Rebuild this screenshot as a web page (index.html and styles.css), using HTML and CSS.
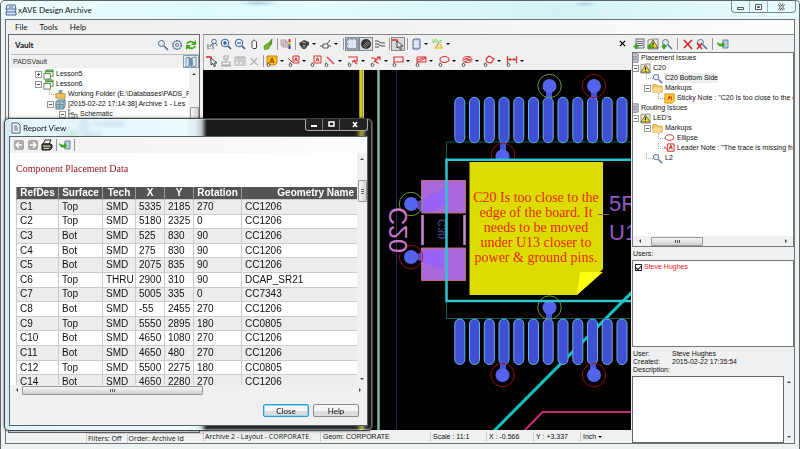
FILE: index.html
```html
<!DOCTYPE html>
<html lang="en">
<head>
<meta charset="utf-8">
<title>xAVE Design Archive</title>
<link rel="stylesheet" href="styles.css">
</head>
<body>
<svg class="defs" aria-hidden="true">
  <symbol id="lens" viewBox="0 0 12 12"><circle cx="4.5" cy="4.5" r="3" fill="#e4edf5" stroke="#56708c"/><path d="M7 7l4 4" stroke="#56708c" stroke-width="1.6"/></symbol>
  <symbol id="one" viewBox="0 0 12 12"><circle cx="8" cy="3.5" r="2.3" fill="#e4edf5" stroke="#56708c"/><path d="M6.5 5.500L4 8M9.500 5l2 3" stroke="#56708c"/><path d="M1 7.500l1-1v5M6 7.500l1-1v5M4 8v1M4 10v1" fill="none" stroke="#334a6a" stroke-width=".8"/></symbol>
  <symbol id="plus" viewBox="0 0 12 12"><circle cx="5" cy="5" r="3.8" fill="#e8f1fb" stroke="#3b5f94"/><path d="M3 5h4M5 3v4" stroke="#123f86" stroke-width="1.2"/><path d="M8 8l3 3" stroke="#3b5f94" stroke-width="1.7"/></symbol>
  <symbol id="minus" viewBox="0 0 12 12"><circle cx="5" cy="5" r="3.800" fill="#e8f1fb" stroke="#3b5f94"/><path d="M3 5h4" stroke="#123f86" stroke-width="1.200"/><path d="M8 8l3 3" stroke="#3b5f94" stroke-width="1.700"/></symbol>
  <symbol id="hand" viewBox="0 0 12 12"><path d="M4 9.500V4l1-1.500 1-.5 1 .5 1.500 1.500v5L8 10.500H5z" fill="#fff" stroke="#445"/></symbol>
  <symbol id="brush" viewBox="0 0 12 12"><path d="M10 1L6.500 5.500 9 7z" fill="#6a4" stroke="#4a8a20"/><path d="M2 8l4-3 2.500 2-2 4-4 .500z" fill="#6cb820" stroke="#4a8a20" stroke-width=".6"/></symbol>
  <symbol id="layers" viewBox="0 0 12 12"><path d="M1 2h5v5H1zM3 4h5v5H3z" fill="#f3d8dc" stroke="#9a8a98" stroke-width=".8"/><path d="M8.500 1h2v3h-2z" fill="#d33"/><path d="M8.500 4h2v2h-2z" fill="#ec3"/><path d="M8.500 6h2v2h-2z" fill="#3a3"/><path d="M8.500 8h2v3h-2z" fill="#33c"/></symbol>
  <symbol id="camera" viewBox="0 0 12 12"><path d="M1 5l5-3 5 2v3l-4 2-5-1z" fill="#444"/><circle cx="6" cy="8" r="2.500" fill="#777" stroke="#222"/><path d="M4 4l4 1" stroke="#aaa"/></symbol>
  <symbol id="gate" viewBox="0 0 12 12"><path d="M0 8h3M3 6h5v4H3zM8 8h3M7 6l3-4" fill="none" stroke="#555"/></symbol>
  <symbol id="grid" viewBox="0 0 12 12"><path d="M1 1h10v10H1z" fill="#cfdcf0" stroke="#55657c"/><path d="M1 4h10M1 8h10M4 1v10M8 1v10" stroke="#fff" stroke-dasharray="1 1"/></symbol>
  <symbol id="disc" viewBox="0 0 12 12"><circle cx="6" cy="6" r="5" fill="#333"/><path d="M3 8l5-5M4 9l5-5M5 10l5-5" stroke="#999" stroke-width=".8"/></symbol>
  <symbol id="nets" viewBox="0 0 12 12"><path d="M1 3h3l3 2h4M1 6h3l3 2h4M1 9h4" fill="none" stroke="#444"/></symbol>
  <symbol id="pick" viewBox="0 0 12 12"><path d="M0 2h5v3" fill="none" stroke="#d22" stroke-width="1.300"/><path d="M5 3v7l2-1.500 1 3 1.500-.500-1-3H11z" fill="#eee" stroke="#222" stroke-width=".8"/></symbol>
  <symbol id="doc" viewBox="0 0 12 12"><path d="M3 2l1-1h6v9l-1 1H3z" fill="#c9d9e9" stroke="#556b88"/><path d="M4 5h4M4 8h4" stroke="#fff"/></symbol>
  <symbol id="tri" viewBox="0 0 12 12"><path d="M1 1v4l3-4v4M6 2v3l3-3v3" fill="none" stroke="#7bdd5c"/><path d="M7 5L4 9" stroke="#e44"/><path d="M2 10h9M8 6l2 4" stroke="#e8c820" stroke-width="1.500"/></symbol>
  <symbol id="stamp" viewBox="0 0 12 12"><path d="M4 1h4v3H4zM6 4v3M2 7h8v3H2zM1 11h10" fill="none" stroke="#aaa" stroke-width="1.200"/></symbol>
  <symbol id="rule" viewBox="0 0 12 12"><path d="M1 2h10v8H1zM3 2v5M5 2v7M7 2v5M9 2v7" fill="none" stroke="#aaa"/></symbol>
  <symbol id="gx" viewBox="0 0 12 12"><path d="M2.500 3l7 7M9.500 3l-7 7" stroke="#aaa" stroke-width="1.200"/></symbol>
  <symbol id="pin" viewBox="0 0 12 12"><path d="M2 7.500v2" stroke="#444"/><circle cx="2.500" cy="10" r="1.400" fill="#fff" stroke="#444" stroke-width=".9"/></symbol>
  <symbol id="anote" viewBox="0 0 12 12"><path d="M1 1h10v7l-2 2H1z" fill="#f4be22" stroke="#c8860c"/><path d="M4 8l2-5 2 5M5 6.500h3" fill="none" stroke="#a33800"/><use href="#pin"/></symbol>
  <symbol id="lead" viewBox="0 0 12 12"><path d="M5 1h6v7H5zM0 3l4 4M6.500 6.500L8 2.500l1.500 4M7 5h2" fill="none" stroke="#d33"/><use href="#pin"/></symbol>
  <symbol id="text" viewBox="0 0 12 12"><path d="M4 1h7v7H4zM6 6.500L7.500 2.500 9 6.500M6.500 5h2" fill="none" stroke="#d33"/><use href="#pin"/></symbol>
  <symbol id="line" viewBox="0 0 12 12"><path d="M3 2l7 7" stroke="#d33" stroke-width="1.200"/><use href="#pin"/></symbol>
  <symbol id="poly" viewBox="0 0 12 12"><path d="M1 2h9v4H7l3 3M5 7l3-2" fill="none" stroke="#d33" stroke-width="1.200"/><use href="#pin"/></symbol>
  <symbol id="curve" viewBox="0 0 12 12"><path d="M1 3h3c3 0 0 5 4 5h1M4 7l5-5M7 2h3v3" fill="none" stroke="#d33" stroke-width="1.200"/><use href="#pin"/></symbol>
  <symbol id="rect" viewBox="0 0 12 12"><path d="M2 2h9v5H2z" fill="none" stroke="#d33" stroke-width="1.200"/><use href="#pin"/></symbol>
  <symbol id="rectx" viewBox="0 0 12 12"><path d="M2 2h9v5H2zM2 5l9-3M3 7l8-4" fill="none" stroke="#d33"/><use href="#pin"/></symbol>
  <symbol id="oval" viewBox="0 0 12 12"><ellipse cx="6.500" cy="4.500" rx="4.500" ry="3" fill="none" stroke="#d33" stroke-width="1.200"/><use href="#pin"/></symbol>
  <symbol id="ovalx" viewBox="0 0 12 12"><ellipse cx="6.500" cy="4.500" rx="4.500" ry="3" fill="none" stroke="#d33"/><path d="M3 5l6-3M4 7l6-3M4 3l6 3" stroke="#d33"/><use href="#pin"/></symbol>
  <symbol id="diam" viewBox="0 0 12 12"><path d="M3 4l3-3 5 3-3 4-4-1z" fill="none" stroke="#d33" stroke-width="1.200"/><use href="#pin"/></symbol>
  <symbol id="dim" viewBox="0 0 12 12"><path d="M1.500 1v7M10.500 1v7M2 4.500h8M4 3v3M8 3v3" fill="none" stroke="#d33" stroke-width="1.200"/><use href="#pin"/></symbol>
  <symbol id="gear" viewBox="0 0 12 12"><circle cx="6" cy="6" r="4.200" fill="#e9f0f6" stroke="#5c7894" stroke-width="1.600" stroke-dasharray="2 .6"/><circle cx="6" cy="6" r="1.500" fill="none" stroke="#5c7894"/></symbol>
  <symbol id="sync" viewBox="0 0 12 12"><path d="M2 5c1-3 5-3 7-1M10 7c-1 3-5 3-7 1" fill="none" stroke="#47a818" stroke-width="1.800"/><path d="M11 1v5H6zM1 11V6h5z" fill="#47a818"/></symbol>
  <symbol id="books" viewBox="0 0 12 12"><path d="M1 2l3-1v9l-3 1zM7 2l3-1h1v9l-3 1z" fill="#e3eef6" stroke="#56748e" stroke-width=".8"/><path d="M4 1l3 1v9l-3-1z" fill="#6c8fae"/></symbol>
  <symbol id="app" viewBox="0 0 12 12"><path d="M2 1h8l1 4-1 2 1 1v3H1V8l1-1-1-2z" fill="#d9e7f4" stroke="#4a6890"/><path d="M1 5h10M1 8h10M4 3h4" stroke="#4a6890"/></symbol>
  <symbol id="page" viewBox="0 0 12 12"><path d="M2 1h6l2 2v8H2z" fill="#fff" stroke="#445a70"/><path d="M4 4h3M4 6h4M4 8h4" stroke="#445a70"/></symbol>
  <symbol id="lesson" viewBox="0 0 12 12"><path d="M3 1h8v7H3z" fill="#fff" stroke="#4a9430"/><path d="M3 2.500h8" stroke="#4a9430" stroke-width="2"/><path d="M1 5h7v6H1z" fill="#fff" stroke="#4c7c50"/></symbol>
  <symbol id="folder" viewBox="0 0 12 12"><path d="M1 2h4l1 1.500h5V10H1z" fill="#f5c860" stroke="#bf8620" stroke-width=".8"/><path d="M2 5h9l-1 5H1z" fill="#ffdc8c"/></symbol>
  <symbol id="work" viewBox="0 0 12 12"><path d="M4 1h4v5H4z" fill="#7b9cc0"/><path d="M1 5h10v5H1z" fill="#f2c45a" stroke="#b98622" stroke-width=".8"/></symbol>
  <symbol id="cube" viewBox="0 0 12 12"><path d="M1 3l2-2h8v7l-2 3H1z" fill="#aecbd4" stroke="#4e7886"/><path d="M1 3h8v8M9 3l2-2M1 6h8M1 8.500h8M5 3v8" fill="none" stroke="#4e7886" stroke-width=".7"/></symbol>
  <symbol id="sch" viewBox="0 0 12 12"><path d="M1 1h3M2 1v9h3M2 5h3M8 6h3v4H8zM5 4h2v2H5zM5 9h2v2H5z" fill="none" stroke="#444" stroke-width=".8"/></symbol>
  <symbol id="warn" viewBox="0 0 12 12"><path d="M1 2l5-1h5v10H1z" fill="#e8e8e0" stroke="#666" stroke-width=".7"/><path d="M6 2l5 8H1z" fill="#f6df19" stroke="#444" stroke-width=".8"/><path d="M6 4.500v3M6 8.500v1" stroke="#111" stroke-width="1.200"/></symbol>
  <symbol id="list" viewBox="0 0 12 12"><path d="M3 1h8v9H3z" fill="#e9edf2" stroke="#667"/><path d="M4 3.500h6M4 5.500h6M4 7.500h6" stroke="#667"/></symbol>
  <symbol id="add" viewBox="0 0 12 12"><path d="M3 6v5M.5 8.500h5" stroke="#39a81c" stroke-width="2"/></symbol>
  <symbol id="addlist" viewBox="0 0 12 12"><use href="#list"/><use href="#add"/></symbol>
  <symbol id="addwarn" viewBox="0 0 12 12"><use href="#warn"/><use href="#add"/></symbol>
  <symbol id="addlens" viewBox="0 0 12 12"><use href="#lens"/><use href="#add"/></symbol>
  <symbol id="rx" viewBox="0 0 12 12"><path d="M2 2l8 9M10 2L2 10" stroke="#cf1e1e" stroke-width="1.500"/></symbol>
  <symbol id="rlens" viewBox="0 0 12 12"><use href="#lens"/><path d="M1 5l5 6M6 5l-5 6" stroke="#cf1e1e" stroke-width="1.300"/></symbol>
  <symbol id="export" viewBox="0 0 12 12"><path d="M6 2h5v8H6z" fill="#b9cede" stroke="#55708a" stroke-width=".8"/><path d="M0 4c2 2 3 1 5 2V3.500L8 6.500 6 9.500l-1-1C2 9 0 7 0 4z" fill="#39ab22"/></symbol>
  <symbol id="sticky" viewBox="0 0 12 12"><path d="M1 1h10v8l-2 2H1z" fill="#ffd23a" stroke="#c8860c"/><path d="M4 8l2-5v3l2-2v4" fill="none" stroke="#d23000"/></symbol>
  <symbol id="ell" viewBox="0 0 12 12"><ellipse cx="6" cy="5" rx="4.500" ry="3" fill="#fff" stroke="#c22"/></symbol>
  <symbol id="leader" viewBox="0 0 12 12"><path d="M4 1h7v8H4zM0 4l5 4M6 7l1.500-5L9 7M6 5h3" fill="none" stroke="#c22"/></symbol>
  <symbol id="back" viewBox="0 0 12 12"><rect x="1" y="1" width="10" height="10" rx="2" fill="#aaa"/><path d="M9 6H3M6 3L3 6l3 3" fill="none" stroke="#fff" stroke-width="1.300"/></symbol>
  <symbol id="fwd" viewBox="0 0 12 12"><rect x="1" y="1" width="10" height="10" rx="2" fill="#aaa"/><path d="M3 6h6M6 3l3 3-3 3" fill="none" stroke="#fff" stroke-width="1.300"/></symbol>
  <symbol id="print" viewBox="0 0 12 12"><path d="M4 1h6L8 5H2z" fill="#fff" stroke="#222"/><path d="M1 5h9l1 1v3l-2 2H1z" fill="#555" stroke="#111"/><path d="M2 7h7M3 9.500h5" stroke="#cfe0b0"/></symbol>
</svg>

<header class="titlebar">
  <svg class="ic"><use href="#app"/></svg><h1>xAVE Design Archive</h1>
  <div class="winbtns">
    <button aria-label="Minimize"><svg viewBox="0 0 17 11"><path d="M5.500 6.500h6v2h-6z" fill="#fff" stroke="#555"/></svg></button><button aria-label="Maximize"><svg viewBox="0 0 17 11"><path d="M5.500 3.500h6v5h-6zM7.500 5.500h2v1h-2z" fill="#fff" stroke="#555"/></svg></button><button class="wide" aria-label="Close window"><svg viewBox="0 0 17 11"><path d="M6 3l5 6M11 3L6 9" stroke="#555" stroke-width="2.600"/><path d="M6 3l5 6M11 3L6 9" stroke="#fff" stroke-width="1"/></svg></button>
  </div>
</header>

<div class="client">
  <nav class="menu"><button>File</button><button>Tools</button><button>Help</button></nav>
  <div class="body">
    <aside class="left">
      <section class="vault">
        <div class="vhead"><h2>Vault</h2>
          <button aria-label="Search"><svg class="ic"><use href="#lens"/></svg></button><button aria-label="Settings"><svg class="ic"><use href="#gear"/></svg></button><button aria-label="Refresh"><svg class="ic"><use href="#sync"/></svg></button></div>
        <div class="vname"><input value="PADSVault" aria-label="Vault name" readonly><button aria-label="Choose vault"><svg class="ic"><use href="#books"/></svg></button></div>
        <div class="vtree">
          <ul class="tree">
            <li><span class="row"><i class="ex more"></i><svg class="ic"><use href="#lesson"/></svg>Lesson5</span></li>
            <li><span class="row"><i class="ex"></i><svg class="ic"><use href="#lesson"/></svg>Lesson6</span>
              <ul>
                <li><span class="row"><i class="ln"></i><svg class="ic"><use href="#work"/></svg>Working Folder (E:\Databases\PADS_F</span></li>
                <li><span class="row"><i class="ex"></i><svg class="ic"><use href="#cube"/></svg>[2015-02-22 17:14:38] Archive 1 - Les</span>
                  <ul><li><span class="row"><i class="ex"></i><svg class="ic"><use href="#sch"/></svg>Schematic</span>
                    <ul><li><span class="row"><i class="ln"></i><svg class="ic"><use href="#page"/></svg>Command</span></li></ul></li>
                    <li><span class="row"><i class="ex"></i><svg class="ic"><use href="#sync"/></svg>Layout</span></li></ul>
                </li>
              </ul></li>
          </ul>
          <div class="vs"><b class="up"></b><b class="thumb low"></b></div>
        </div>
      </section>
      <footer class="lstat"><span>Filters: Off</span><span class="grow">Order: Archive Id</span></footer>
    </aside>

    <main class="main">
      <div class="bars">
        <div class="barcol">
          <div class="bar">
            <button aria-label="Zoom 1:1"><svg class="ic"><use href="#one"/></svg></button><button aria-label="Zoom in"><svg class="ic"><use href="#plus"/></svg></button><button aria-label="Zoom out"><svg class="ic"><use href="#minus"/></svg></button><button aria-label="Pan"><svg class="ic"><use href="#hand"/></svg></button><button aria-label="Highlight"><svg class="ic"><use href="#brush"/></svg></button><i class="sep"></i><button aria-label="Layers"><svg class="ic"><use href="#layers"/></svg></button><i class="sep"></i><button class="drop" aria-label="Snapshot"><svg class="ic"><use href="#camera"/></svg></button><button class="drop" aria-label="Parts"><svg class="ic"><use href="#gate"/></svg></button><i class="sep"></i><button class="on" aria-label="Grid"><svg class="ic"><use href="#grid"/></svg></button><button class="on" aria-label="Fill"><svg class="ic"><use href="#disc"/></svg></button><button aria-label="Nets"><svg class="ic"><use href="#nets"/></svg></button><i class="sep"></i><button class="on" aria-label="Select"><svg class="ic"><use href="#pick"/></svg></button><i class="sep"></i><button class="drop" aria-label="Document"><svg class="ic"><use href="#doc"/></svg></button><button class="drop" aria-label="Measure"><svg class="ic"><use href="#tri"/></svg></button>
          </div>
          <div class="bar">
            <button aria-label="Select markup"><svg class="ic"><use href="#pick"/></svg></button><button aria-label="Stamp"><svg class="ic"><use href="#stamp"/></svg></button><button aria-label="Ruler"><svg class="ic"><use href="#rule"/></svg></button><button aria-label="Delete"><svg class="ic"><use href="#gx"/></svg></button><i class="sep"></i><button class="drop" aria-label="Sticky note"><svg class="ic"><use href="#anote"/></svg></button><button class="drop" aria-label="Leader note"><svg class="ic"><use href="#lead"/></svg></button><button aria-label="Text"><svg class="ic"><use href="#text"/></svg></button>
            <div class="shapes"><button class="drop" aria-label="Line"><svg class="ic"><use href="#line"/></svg></button><button class="drop" aria-label="Polyline"><svg class="ic"><use href="#poly"/></svg></button><button class="drop" aria-label="Curve"><svg class="ic"><use href="#curve"/></svg></button><button class="drop" aria-label="Rectangle"><svg class="ic"><use href="#rect"/></svg></button><button class="drop" aria-label="Filled rectangle"><svg class="ic"><use href="#rectx"/></svg></button><button class="drop" aria-label="Ellipse"><svg class="ic"><use href="#oval"/></svg></button><button class="drop" aria-label="Filled ellipse"><svg class="ic"><use href="#ovalx"/></svg></button><button class="drop" aria-label="Polygon"><svg class="ic"><use href="#diam"/></svg></button><button class="drop" aria-label="Dimension"><svg class="ic"><use href="#dim"/></svg></button></div>
          </div>
        </div>
        <button class="closeview" aria-label="Close view"><svg viewBox="0 0 8 8"><path d="M1 1l6 6M7 1L1 7" stroke="#000" stroke-width="1.500"/></svg></button>
      </div>
      <svg class="pcb" viewBox="203 69 428 361" preserveAspectRatio="xMinYMin slice">
        <defs>
          <rect id="pad" width="10" height="45.500" rx="5" fill="#4050d4" stroke="#62b4e4" stroke-width="1"/>
          <g id="pads"><use href="#pad" x="454.800"/><use href="#pad" x="469.500"/><use href="#pad" x="484.300"/><use href="#pad" x="499"/><use href="#pad" x="513.800"/><use href="#pad" x="528.500"/><use href="#pad" x="543.200"/><use href="#pad" x="558"/><use href="#pad" x="572.800"/><use href="#pad" x="587.500"/><use href="#pad" x="602.200"/><use href="#pad" x="617"/></g>
        </defs>
        <path d="M203 69h428v361H203z" fill="#000"/>
        <path d="M361 69v361" stroke="#d2cc00" stroke-width="3.500"/><path d="M363.500 69v361" stroke="#c9cfe8"/>
        <path d="M378.500 69v361" stroke="#83b5a6" stroke-width="2.500"/><path d="M396.500 69v361" stroke="#25255e"/>
        <path d="M492 432L632 291" stroke="#12c4c0" stroke-width="3"/>
        <path d="M523 431l19.500-20H631" fill="none" stroke="#d22874" stroke-width="2"/><path d="M551 429.500h80" stroke="#8c1c50"/>
        <path d="M631 141H446.500V317.500H631" fill="none" stroke="#087870" stroke-width=".8"/>
        <g stroke="#4256dc" stroke-width="6"><path d="M549 85v15M594 85v15M503 138v16M549 306v15M503 360v14M593 360v14"/></g>
        <use href="#pads" y="96.300"/><use href="#pads" y="318"/>
        <g stroke="#4256dc" stroke-width="4"><path d="M549 88v12M593 88v12M503 138v16M549 306v15M503 360v14M593 360v14"/></g>
        <g fill="#5563ec"><circle cx="549.500" cy="85" r="7"/><circle cx="594" cy="85" r="7"/><path d="M496 158a7 7 0 1 1 13 0z"/><circle cx="549.500" cy="306.500" r="7"/><circle cx="502.500" cy="374" r="7"/><circle cx="594" cy="374" r="7"/></g>
        <path d="M421.500 179.500h44v32.500h-44zM421.500 247h44v32.500h-44z" fill="#a968dc" stroke="#bd7060"/>
        <path d="M411 203l10-4 24-12v16l-14 8h-9zM411 256l10-5 22-2v20l-18-7z" fill="#9060ff" opacity=".7"/>
        <g fill="#5563ec"><circle cx="411" cy="203" r="7"/><circle cx="411" cy="256" r="7"/></g>
        <g fill="none" stroke="#6fa83c" stroke-width=".9"><circle cx="549.500" cy="85" r="11.700"/><circle cx="549.500" cy="306.500" r="11.700"/><circle cx="411" cy="203" r="11.700"/></g>
        <g fill="none" stroke="#a80c14" stroke-width=".9"><circle cx="594" cy="85" r="11.700"/><path d="M492 158a11.700 11.700 0 1 1 22 0"/><circle cx="411" cy="256" r="11.700"/><circle cx="502.500" cy="374" r="11.700"/><circle cx="594" cy="374" r="11.700"/></g>
        <path d="M422.500 214v30M464.500 214v30" stroke="#cc8cd8" stroke-width="2.500"/>
        <text transform="matrix(0 1 1 0 407 206)" font-size="25" fill="#c878cc">C20</text>
        <text transform="matrix(0 1 1 0 446 218)" font-size="11" fill="#67489a">C30</text>
        <path d="M631 158.700H446.500V300H631" fill="none" stroke="#30c4d0" stroke-width="2.500"/>
        <path d="M469.500 161H603V268L577 294H469.500z" fill="#dcdc00"/><path d="M580 271h23l-26 23z" fill="#ffff10"/>
        <path d="M598 213.500h11" stroke="#a04c78"/>
        <g font-size="22" fill="#9458c4"><text x="609" y="210">5R</text><text x="609" y="239">U1</text></g>
        <g class="note" text-anchor="middle" font-size="14" fill="#e62a10"><text x="536" y="201">C20 Is too close to the</text><text x="536" y="216">edge of the board. It</text><text x="536" y="231">needs to be moved</text><text x="536" y="246">under U13 closer to</text><text x="536" y="261">power &amp; ground pins.</text></g>
      </svg>
      <footer class="mstat"><span class="s1">Archive 2 - Layout - CORPORATE</span><span class="s2">Geom: CORPORATE</span><span class="s3">Scale : 11:1</span><span class="s4">X : -0.566</span><span class="s4">Y : +3.337</span><button class="drop">Inch</button></footer>
    </main>

    <aside class="right">
      <div class="bar rbar"><button aria-label="Add list"><svg class="ic"><use href="#addlist"/></svg></button><button aria-label="Add issue"><svg class="ic"><use href="#addwarn"/></svg></button><button aria-label="Add view"><svg class="ic"><use href="#addlens"/></svg></button><i class="sep"></i><button aria-label="Delete"><svg class="ic"><use href="#rx"/></svg></button><button aria-label="Remove view"><svg class="ic"><use href="#rlens"/></svg></button><i class="sep"></i><button aria-label="Export"><svg class="ic"><use href="#export"/></svg></button></div>
      <div class="issues">
        <ul class="tree">
          <li><span class="row"><i class="ex"></i><svg class="ic"><use href="#list"/></svg>Placement Issues</span>
            <ul><li><span class="row"><i class="ex"></i><svg class="ic"><use href="#warn"/></svg>C20</span>
              <ul><li><span class="row"><i class="ln"></i><svg class="ic"><use href="#lens"/></svg><span class="sel">C20 Bottom Side</span></span></li>
                <li><span class="row"><i class="ex"></i><svg class="ic"><use href="#folder"/></svg>Markups</span>
                  <ul><li><span class="row"><i class="ln"></i><svg class="ic"><use href="#sticky"/></svg>Sticky Note : "C20 Is too close to the ec</span></li></ul></li></ul></li></ul></li>
          <li><span class="row"><i class="ex"></i><svg class="ic"><use href="#list"/></svg>Routing Issues</span>
            <ul><li><span class="row"><i class="ex"></i><svg class="ic"><use href="#warn"/></svg>LED's</span>
              <ul><li><span class="row"><i class="ex"></i><svg class="ic"><use href="#folder"/></svg>Markups</span>
                <ul><li><span class="row"><i class="ln"></i><svg class="ic"><use href="#ell"/></svg>Ellipse</span></li>
                  <li><span class="row"><i class="ln"></i><svg class="ic"><use href="#leader"/></svg>Leader Note : "The trace is missing from</span></li></ul></li>
                <li><span class="row"><i class="ln"></i><svg class="ic"><use href="#lens"/></svg>L2</span></li></ul></li></ul></li>
        </ul>
        <div class="hs"><b class="lt"></b><b class="thumb short"></b><b class="rt"></b></div>
      </div>
      <h3>Users:</h3>
      <div class="users"><label><input type="checkbox" checked>Steve Hughes</label></div>
      <dl><dt>User:</dt><dd>Steve Hughes</dd><dt>Created:</dt><dd>2015-02-22 17:35:54</dd></dl>
      <label class="dlab" for="desc">Description:</label>
      <div class="desc"><textarea id="desc"></textarea><div class="vs"><b class="up"></b><b class="down"></b></div></div>
    </aside>
  </div>
</div>

<section class="dialog" role="dialog" aria-labelledby="rv">
  <header><svg class="ic"><use href="#page"/></svg><h2 id="rv">Report View</h2>
    <div class="dbtns"><button aria-label="Minimize report"><svg viewBox="0 0 17 11"><path d="M5 6h6v2H5z" fill="#fff"/></svg></button><button aria-label="Maximize report"><svg viewBox="0 0 17 11"><path d="M6 3h5v4H6z" fill="none" stroke="#fff" stroke-width="1.500"/></svg></button><button class="wide" aria-label="Close report"><svg viewBox="0 0 17 11"><path d="M8 3l4 5M12 3L8 8" stroke="#fff" stroke-width="1.600"/></svg></button></div>
  </header>
  <div class="dbody">
    <div class="bar dbar"><button aria-label="Back"><svg class="ic"><use href="#back"/></svg></button><button aria-label="Forward"><svg class="ic"><use href="#fwd"/></svg></button><button aria-label="Print"><svg class="ic"><use href="#print"/></svg></button><i class="sep"></i><button aria-label="Export report"><svg class="ic"><use href="#export"/></svg></button><i class="sep"></i></div>
    <div class="report">
      <div class="sheet">
        <p>Component Placement Data</p>
        <table>
          <colgroup><col class="c1"><col class="c2"><col class="c3"><col class="c4"><col class="c4"><col class="c5"><col></colgroup>
          <thead><tr><th>RefDes</th><th>Surface</th><th>Tech</th><th>X</th><th>Y</th><th>Rotation</th><th class="geo">Geometry Name</th></tr></thead>
          <tbody>
            <tr><td>C1</td><td>Top</td><td>SMD</td><td>5335</td><td>2185</td><td>270</td><td>CC1206</td></tr>
            <tr><td>C2</td><td>Top</td><td>SMD</td><td>5180</td><td>2325</td><td>0</td><td>CC1206</td></tr>
            <tr><td>C3</td><td>Bot</td><td>SMD</td><td>525</td><td>830</td><td>90</td><td>CC1206</td></tr>
            <tr><td>C4</td><td>Bot</td><td>SMD</td><td>275</td><td>830</td><td>90</td><td>CC1206</td></tr>
            <tr><td>C5</td><td>Bot</td><td>SMD</td><td>2075</td><td>835</td><td>90</td><td>CC1206</td></tr>
            <tr><td>C6</td><td>Top</td><td>THRU</td><td>2900</td><td>310</td><td>90</td><td>DCAP_SR21</td></tr>
            <tr><td>C7</td><td>Top</td><td>SMD</td><td>5005</td><td>335</td><td>0</td><td>CC7343</td></tr>
            <tr><td>C8</td><td>Bot</td><td>SMD</td><td>-55</td><td>2455</td><td>270</td><td>CC1206</td></tr>
            <tr><td>C9</td><td>Top</td><td>SMD</td><td>5550</td><td>2895</td><td>180</td><td>CC0805</td></tr>
            <tr><td>C10</td><td>Bot</td><td>SMD</td><td>4650</td><td>1080</td><td>270</td><td>CC1206</td></tr>
            <tr><td>C11</td><td>Bot</td><td>SMD</td><td>4650</td><td>480</td><td>270</td><td>CC1206</td></tr>
            <tr><td>C12</td><td>Top</td><td>SMD</td><td>5500</td><td>2275</td><td>180</td><td>CC0805</td></tr>
            <tr><td>C14</td><td>Bot</td><td>SMD</td><td>4650</td><td>2280</td><td>270</td><td>CC1206</td></tr>
          </tbody>
        </table>
      </div>
      <div class="vs"><b class="up"></b><b class="thumb mid"></b><b class="down"></b></div>
    </div>
    <div class="hs"><b class="lt"></b><b class="thumb long"></b><b class="rt"></b></div>
    <div class="actions"><button class="primary">Close</button><button>Help</button></div>
  </div>
</section>
</body>
</html>
```
FILE: styles.css
```css
* { box-sizing: border-box; margin: 0; padding: 0; }
body {
  height: 100vh; display: flex; flex-direction: column; position: relative; overflow: hidden;
  font: 7px/10px "Liberation Sans", Arial, sans-serif; color: #111;
  background: #eef2f3; border: 1px solid #5c6468; border-width: 1px 1px 0; border-radius: 5px 5px 0 0;
}
button { font: inherit; color: inherit; background: none; border: 0; }
ul { list-style: none; }
h1, h2, h3 { font: inherit; }
.defs { display: none; }
.ic { width: 12px; height: 12px; flex: none; display: block; }

.titlebar {
  flex: none; height: 18px; display: flex; align-items: center; gap: 1px; padding: 0 3px 0 4px;
  font: 8px/10px Lato, "Open Sans", sans-serif;
  background:
    radial-gradient(ellipse 22px 4px at 257px 2px, #b4d3ea, transparent),
    radial-gradient(ellipse 12px 3px at 584px 3px, #b4d3ea, transparent),
    linear-gradient(90deg, #eefbfb, #dffcfc 25%, #e4fdfd 40%, #d4f2f3 70%, #e8fdfd);
}
.titlebar h1 { flex: 1; }
.winbtns { align-self: flex-start; display: flex; border: 1px solid #7d8a90; border-top: 0; border-radius: 0 0 4px 4px; }
.winbtns button { width: 18px; height: 11px; border-right: 1px solid #a5b1b5; }
.winbtns button.wide, .dbtns button.wide { width: 27px; border-right: 0; }
.winbtns svg, .dbtns svg { display: block; margin: auto; width: 17px; height: 11px; }

.client { flex: 1; min-height: 0; display: flex; flex-direction: column; margin: 0 4px 5px; border: 1px solid #6d7477; background: #f0f0f0; }
.menu { flex: none; height: 14px; display: flex; gap: 12px; padding-left: 9px; background: linear-gradient(90deg, #f0f0f0 30%, #fcfcfc); font: 8px/10px Lato, "Open Sans", sans-serif; }
.body { flex: 1; min-height: 0; display: flex; }

.left { flex: 0 0 197px; min-width: 0; display: flex; flex-direction: column; min-height: 0; }
.vault { flex: 1; min-height: 0; margin: 0 3px 0 2px; display: flex; flex-direction: column; border: 1px solid #666; }
.vhead { flex: none; height: 19px; display: flex; align-items: center; gap: 2px; padding: 0 2px 0 6px; }
.vhead h2 { flex: 1; font: bold 8px/10px Lato, "Open Sans", sans-serif; }
.vname { flex: none; display: flex; height: 14px; margin-left: 2px; border-top: 1px solid #bbb; }
.vname input { flex: 1; min-width: 0; font: inherit; border: 0; background: #f0f0f0; padding-left: 2px; color: #333; }
.vname button { border: 1px solid #8a9aa8; background: #e6edf3; padding: 0 1px; }
.vtree { flex: 1; min-height: 0; display: flex; margin-left: 2px; background: #fff; }
.vtree .tree { flex: 1; min-width: 0; padding: 1px 0 0 21px; }

.tree { overflow: hidden; white-space: nowrap; }
.tree ul { padding-left: 12px; }
.row { display: flex; align-items: center; height: 10px; }
.row .ic { width: 11px; height: 11px; margin-right: 2px; }
.ex, .ln { flex: none; width: 11px; height: 10px; }
.ex::before { content: ""; display: block; width: 5px; height: 5px; margin: 2px 0 0 3px; border: 1px solid #999; background: linear-gradient(#555, #555) center / 3px 1px no-repeat #fff; }
.ex.more::before { background: linear-gradient(#555, #555) center / 3px 1px no-repeat, linear-gradient(#555, #555) center / 1px 3px no-repeat #fff; }
.ln::before { content: ""; display: block; width: 6px; height: 5px; margin-left: 5px; border: dotted #aaa; border-width: 0 0 1px 1px; }
.sel { background: #eee; }

.vs { flex: 0 0 10px; background: #f0f0f0; display: flex; flex-direction: column; align-items: center; }
.hs { flex: 0 0 10px; background: #f0f0f0; display: flex; align-items: center; padding: 0 4px; }
.up, .down, .lt, .rt { border: 2px solid transparent; width: 0; height: 0; }
.up { border-bottom-color: #444; margin-top: 3px; }
.down { border-top-color: #444; margin: auto 0 3px; }
.lt { border-right-color: #444; }
.rt { border-left-color: #444; margin-left: auto; }
.thumb { border: 1px solid #999; border-radius: 1px; background: linear-gradient(90deg, #f6f6f6, #d2d2d2); width: 9px; }
.hs .thumb { height: 9px; width: auto; background: repeating-linear-gradient(90deg, #555 0 1px, transparent 1px 2px) center / 5px 3px no-repeat, linear-gradient(#f6f6f6, #cfcfcf); }
.low { margin-top: 32px; height: 40px; }
.mid { margin-top: 20px; height: 22px; background: repeating-linear-gradient(#666 0 1px, transparent 1px 2px) center / 3px 5px no-repeat, linear-gradient(90deg, #f6f6f6, #d2d2d2); }
.short { flex: 0 0 52px; margin-left: 10px; }
.long { flex: 0 0 181px; margin-left: 4px; }

.lstat { flex: none; height: 10px; display: flex; gap: 2px; padding-left: 80px; font-family: "Open Sans", sans-serif; }
.lstat span { border: 1px solid #ccc; border-width: 1px 0 0 1px; padding: 0 3px 0 1px; line-height: 9px; }
.grow { flex: 1; white-space: nowrap; }

.main { flex: 1; min-width: 0; display: flex; flex-direction: column; border-top: 1px solid #888; }
.bars { flex: none; display: flex; align-items: flex-start; justify-content: space-between; height: 35px; border-left: 1px solid #aaa; }
.barcol { display: flex; flex-direction: column; padding-left: 1px; }
.bar { display: flex; align-items: center; height: 17px; }
.bar button { flex: none; height: 14px; padding: 0 1px; }
.drop { display: flex; align-items: center; }
.drop::after { content: ""; border: 2px solid transparent; border-top-color: #000; border-bottom: 0; margin: 0 2px; }
.on { background: #d6d9dc; outline: 1px solid #8a8a8a; outline-offset: -1px; }
.sep { flex: none; width: 1px; height: 12px; margin: 0 1px 0 2px; background: #999; }
.shapes { flex: 0 0 204px; display: flex; justify-content: space-between; }
.closeview { padding: 5px 5px; }
.closeview svg { width: 7px; height: 7px; display: block; }
.pcb { flex: 1; min-height: 0; width: 100%; display: block; }
.pcb .note { font-family: "Liberation Serif", "Times New Roman", serif; }
.mstat { flex: none; height: 13px; display: flex; align-items: center; white-space: nowrap; overflow: hidden; }
.mstat > * { padding-left: 2px; border-left: 1px solid #ccc; line-height: 10px; }
.mstat .s1 { flex: 0 0 117px; padding-left: 1px; font-family: "Open Sans", sans-serif; }
.s2 { flex: 0 0 110px; }
.s3 { flex: 0 0 56px; }
.s4 { flex: 0 0 47px; }

.right { flex: 0 0 163px; min-width: 0; display: flex; flex-direction: column; min-height: 0; border-top: 1px solid #888; padding-left: 1px; }
.rbar { flex: none; height: 17px; }
.issues { flex: none; height: 195px; border: 1px solid #777; background: #fff; display: flex; flex-direction: column; overflow: hidden; }
.issues .tree { flex: 1; margin-left: -16px; }
.right h3 { line-height: 13px; padding-left: 1px; }
.users { height: 87px; border: 1px solid #777; background: #fff; padding: 1px 2px; }
.users label { display: flex; align-items: center; gap: 2px; color: #f01818; }
.users input { appearance: none; width: 7px; height: 7px; border: 1px solid #222; background: #fff; }
.users input:checked::before { content: ""; display: block; width: 2px; height: 4px; margin-left: 1px; border: solid #111; border-width: 0 1px 1px 0; transform: rotate(45deg); }
.right dl { display: grid; grid-template-columns: 39px 1fr; line-height: 8px; padding: 3px 0 0 1px; }
.dlab { line-height: 8px; padding: 0 0 2px 1px; }
.desc { flex: 1; min-height: 0; display: flex; }
.desc textarea { flex: 1; min-width: 0; resize: none; border: 1px solid #666; background: #fff; font: inherit; }
.rbar button { padding: 0 1px; }
.rbar .sep { margin: 0 3px; }

.dialog {
  position: absolute; left: 3px; top: 117px; width: 369px; height: 313px;
  display: flex; flex-direction: column; padding: 0 4px 4px; border: 1px solid #3c4448; border-radius: 5px;
  background: linear-gradient(90deg, rgba(215, 243, 255, .75), rgba(230, 248, 255, .65) 52%, rgba(255, 255, 255, .1) 55%);
  backdrop-filter: blur(2px); box-shadow: inset 0 0 0 1px rgba(255, 255, 255, .35), 0 0 3px rgba(0, 0, 0, .6);
}
.dialog header { flex: none; height: 17px; display: flex; align-items: center; padding-left: 1px; font: 8px/10px Lato, "Open Sans", sans-serif; }
.dialog header h2 { flex: 1; padding-left: 1px; }
.dbtns { align-self: flex-start; display: flex; border: 1px solid #aaa; border-top: 0; border-radius: 0 0 3px 3px; background: #222; }
.dbtns button { width: 17px; height: 11px; border-right: 1px solid #777; }
.dbody { flex: 1; min-height: 0; display: flex; flex-direction: column; background: #f0f0f0; border: 1px solid #56626a; }
.dbar { flex: none; height: 16px; padding-left: 2px; background: linear-gradient(90deg, #f2f2f2, #fcfcfc); }
.report { flex: 1; min-height: 0; display: flex; background: #fff; }
.sheet { flex: 1; min-width: 0; overflow: hidden; padding: 10px 0 0 6px; }
.sheet p { font: 10px/12px "Liberation Serif", "Times New Roman", serif; color: #8b1018; margin-bottom: 12px; }
table { border-collapse: collapse; table-layout: fixed; width: 100%; height: 203px; font-size: 10px; line-height: 12px; }
th { background: #545454; color: #fff; text-align: center; border-left: 1px solid #999; }
.geo { text-align: right; padding-right: 3px; }
td { border: 1px solid #ccc; border-right: 0; padding-left: 3px; }
tbody tr:nth-child(odd) { background: #ececec; }
.c1 { width: 42px; } .c2 { width: 44px; } .c3 { width: 33px; } .c4 { width: 29px; } .c5 { width: 48px; }
.actions { flex: none; display: flex; justify-content: flex-end; gap: 4px; padding: 9px 8px 8px; font: 8px/10px Lato, "Open Sans", sans-serif; }
.actions button { width: 46px; height: 13px; border: 1px solid #8a8a8a; border-radius: 2px; background: linear-gradient(#f6f6f6 50%, #dcdcdc 50%); }
.actions .primary { border-color: #2a9cd8; box-shadow: inset 0 0 0 1px #8fd8f4; }
```
